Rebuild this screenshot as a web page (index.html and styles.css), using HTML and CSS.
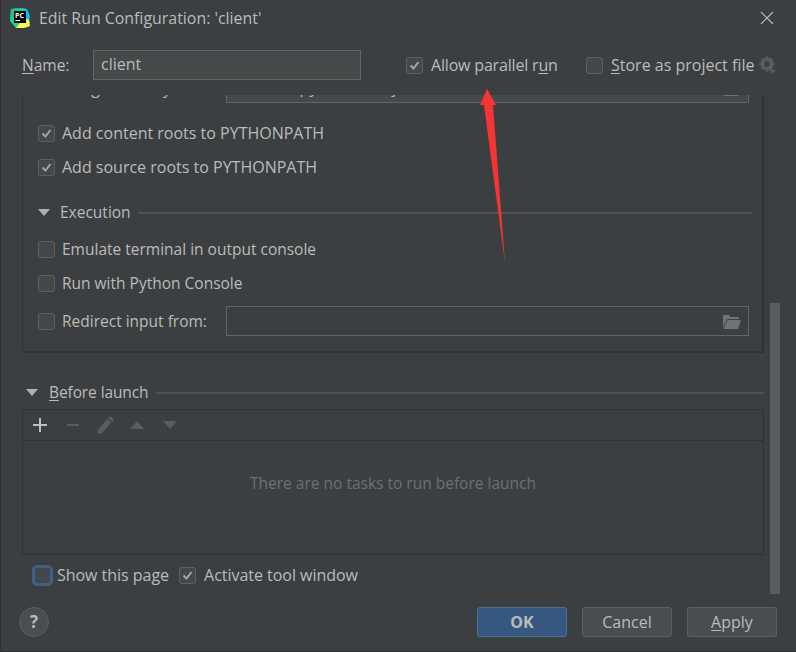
FILE: index.html
```html
<!DOCTYPE html>
<html lang="en">
<head>
  <meta charset="UTF-8">
  <title>Edit Run Configuration</title>
  <link rel="stylesheet" href="styles.css">
</head>
<body>
  <div class="dialog">
    <div class="title-bar">
      <svg class="app-logo" viewBox="0 0 20 20">
        <path d="M1 1L13 0L15 4L19 19L6 20L0 13z" fill="#21d789"></path>
        <path d="M10 15L19 10L20 18L14 20L6 20z" fill="#fcf84a"></path>
        <path d="M12 0L17 1L20 8L19 12L15 10z" fill="#07c3f2"></path>
        <path d="M1 1L8 0L5 8L0 12z" fill="#1fbf8f"></path>
        <rect x="4" y="3" width="12" height="12" fill="#000"></rect>
        <text x="5" y="9.500" class="logo-text">PC</text>
        <rect x="5.200" y="12" width="5" height="1" fill="#fff"></rect>
      </svg>
      <span class="title-text">Edit Run Configuration: 'client'</span>
      <svg class="close-icon" viewBox="0 0 14 14">
        <path d="M1 1L13 13M13 1L1 13"></path>
      </svg>
    </div>

    <div class="name-row">
      <label class="name-label"><u>N</u>ame:</label>
      <div class="name-input">client</div>
      <div class="name-options">
        <span class="check checked">
          <svg viewBox="0 0 17 17"><path d="M4 8.5L7.3 12L13 4.5"></path></svg>
        </span>
        <span class="option-text parallel-text">Allow parallel r<u>u</u>n</span>
        <span class="check store-check"></span>
        <span class="option-text"><u>S</u>tore as project file</span>
        <svg class="gear-icon" viewBox="0 0 18 18">
          <circle class="gear-ring" cx="8" cy="8" r="4.500"></circle>
          <path class="gear-teeth" d="M8 .5v3M8 12.500v3M.5 8h3M12.500 8h3M2.700 2.700l2 2M11.300 11.300l2 2M2.700 13.300l2-2M13.300 2.700l-2 2"></path>
          <path d="M10 14h7l-3.500 3.500z"></path>
        </svg>
      </div>
    </div>

    <div class="scroll-area">
      <div class="run-panel">
        <div class="clipped-row">
          <span class="clipped-label">Working directory:</span>
          <div class="field clipped-field">
            <span>D:\code\python\study</span>
            <svg class="folder-icon" viewBox="0 0 19 14">
              <path d="M1 0h6l1.500 2H17v2H5L1 13z"></path>
              <path d="M5.500 5H19l-3 9H1.500z"></path>
            </svg>
          </div>
        </div>
        <div class="check-row path-row first-check">
          <span class="check checked">
            <svg viewBox="0 0 17 17"><path d="M4 8.5L7.3 12L13 4.5"></path></svg>
          </span>
          Add content roots to PYTHONPATH
        </div>
        <div class="check-row path-row">
          <span class="check checked">
            <svg viewBox="0 0 17 17"><path d="M4 8.5L7.3 12L13 4.5"></path></svg>
          </span>
          Add source roots to PYTHONPATH
        </div>
        <div class="section-head execution-head">
          <span class="triangle"></span>
          <span class="section-name">Execution</span>
          <span class="section-line"></span>
        </div>
        <div class="check-row">
          <span class="check"></span>
          Emulate terminal in output console
        </div>
        <div class="check-row">
          <span class="check"></span>
          Run with Python Console
        </div>
        <div class="check-row redirect-row">
          <span class="check"></span>
          <span class="redirect-label">Redirect input from:</span>
          <div class="field redirect-field">
            <svg class="folder-icon" viewBox="0 0 19 14">
              <path d="M1 0h6l1.500 2H17v2H5L1 13z"></path>
              <path d="M5.500 5H19l-3 9H1.500z"></path>
            </svg>
          </div>
        </div>
      </div>

      <div class="section-head launch-head">
        <span class="triangle"></span>
        <span class="section-name"><u>B</u>efore launch</span>
        <span class="section-line"></span>
      </div>

      <div class="task-box">
        <div class="task-toolbar">
          <svg class="tool" viewBox="0 0 14 14"><path class="tool-on" d="M6 0h2v6h6v2H8v6H6V8H0V6h6z"></path></svg>
          <svg class="tool" viewBox="0 0 14 14"><path d="M1 6h12v2H1z"></path></svg>
          <svg class="tool tool-pencil" viewBox="0 0 18 18"><path d="M13 0l4 3.500-1.800 2-4-3.500zM10.300 3l4 3.500L5 17l-4.500 1L1 13.500z"></path></svg>
          <svg class="tool tool-arrow" viewBox="0 0 14 8"><path d="M7 0l7 8H0z"></path></svg>
          <svg class="tool tool-arrow" viewBox="0 0 14 8"><path d="M0 0h14L7 8z"></path></svg>
        </div>
        <div class="task-empty">There are no tasks to run before launch</div>
      </div>

      <div class="launch-options">
        <span class="check focused"></span>
        <span class="show-label">Show this page</span>
        <span class="check checked">
          <svg viewBox="0 0 17 17"><path d="M4 8.5L7.3 12L13 4.5"></path></svg>
        </span>
        <span>Activate tool window</span>
      </div>

      <div class="scroll-thumb"></div>
    </div>

    <div class="footer">
      <div class="help-button">?</div>
      <div class="footer-buttons">
        <div class="btn btn-ok">OK</div>
        <div class="btn">Cancel</div>
        <div class="btn"><u>A</u>pply</div>
      </div>
    </div>

    <svg class="red-arrow" viewBox="0 0 40 180">
      <path d="M18 0L27 16L24 16L36 174L15 16L11 16z"></path>
    </svg>
  </div>
</body>
</html>
```

FILE: styles.css
```css
* {
  margin: 0;
  padding: 0;
  box-sizing: border-box;
}

body {
  font-family: "Open Sans", "Noto Sans", sans-serif;
  font-size: 15.5px;
  color: #bbbbbb;
  background: #3c3f41;
}

u {
  text-underline-offset: 2px;
}

.dialog {
  position: relative;
  width: 796px;
  height: 652px;
  background: #3c3f41;
  border-left: 1px solid #323232;
  border-bottom: 1px solid #323232;
  display: flex;
  flex-direction: column;
  overflow: hidden;
}

/* Title bar */
.title-bar {
  height: 36px;
  padding-left: 9px;
  padding-right: 22px;
  display: flex;
  align-items: center;
}

.app-logo {
  width: 20px;
  height: 20px;
}

.logo-text {
  font-family: "Open Sans", sans-serif;
  font-size: 7px;
  font-weight: 700;
  fill: #fff;
}

.title-text {
  margin-left: 9px;
  font-size: 15.9px;
}

.close-icon {
  width: 14px;
  height: 14px;
  margin-left: auto;
  fill: none;
  stroke: #bbbbbb;
  stroke-width: 1.1;
}

/* Name row */
.name-row {
  height: 59px;
  padding: 14px 0 15px 21px;
  display: flex;
  align-items: center;
}

.name-label {
  width: 71px;
}

.name-input {
  width: 268px;
  height: 30px;
  padding-left: 7px;
  line-height: 27px;
  font-size: 16px;
  background: #45494a;
  border: 1px solid #646464;
}

.name-options {
  margin-left: 45px;
  display: flex;
  align-items: center;
  font-size: 16px;
}

.option-text {
  margin-left: 8px;
}

.parallel-text {
  width: 126px;
  white-space: nowrap;
  letter-spacing: -0.18px;
}

.store-check {
  margin-left: 29px;
}

.gear-icon {
  width: 18px;
  height: 18px;
  margin-left: 5px;
  fill: #5a5d5f;
}

.gear-ring {
  fill: none;
  stroke: #5a5d5f;
  stroke-width: 3.5;
}

.gear-teeth {
  fill: none;
  stroke: #5a5d5f;
  stroke-width: 3;
}

/* Checkboxes */
.check {
  flex: none;
  display: inline-block;
  width: 17px;
  height: 17px;
  background: #43494a;
  border: 1px solid #5e6060;
  border-radius: 3px;
}

.check svg {
  display: block;
  width: 15px;
  height: 15px;
  fill: none;
  stroke: #a7a7a7;
  stroke-width: 2.2;
}

.check.focused {
  width: 21px;
  height: 21px;
  margin-left: -2px;
  background: #43494a;
  border: 3px solid #3d6185;
  border-radius: 5px;
}

/* Scrolling part */
.scroll-area {
  position: relative;
  height: 500px;
  padding: 0 32px 0 21px;
}

.run-panel {
  height: 258px;
  padding-left: 15px;
  padding-right: 13px;
  border-left: 1px solid #323232;
  border-right: 2px solid #323232;
  border-bottom: 2px solid #323232;
  overflow: hidden;
}

.clipped-row {
  height: 30px;
  margin-top: -22px;
  display: flex;
  align-items: center;
  font-size: 16px;
}

.clipped-label {
  width: 188px;
}

.field {
  position: relative;
  height: 30px;
  flex: 1;
  background: #3c3f41;
  border: 1px solid #646464;
}

.clipped-field {
  height: 30px;
  padding-left: 9px;
  line-height: 27px;
  background: #45494a;
}

.folder-icon {
  position: absolute;
  right: 7px;
  top: 8px;
  width: 19px;
  height: 14px;
  fill: #6e7375;
}

.check-row {
  height: 34px;
  display: flex;
  align-items: center;
  gap: 7px;
}

.path-row {
  font-size: 16px;
}

.first-check {
  margin-top: 13px;
}

.section-head {
  display: flex;
  align-items: center;
}

.execution-head {
  height: 24px;
  margin-top: 16px;
  margin-bottom: 8px;
  margin-right: -3px;
}

.launch-head {
  height: 24px;
  margin-top: 27px;
  margin-left: 4px;
}

.launch-head .section-name {
  margin-left: 11px;
  letter-spacing: -0.1px;
}

.triangle {
  flex: none;
  width: 0;
  height: 0;
  border-left: 6px solid transparent;
  border-right: 6px solid transparent;
  border-top: 7px solid #afb1b3;
}

.section-name {
  margin-left: 10px;
}

.section-line {
  flex: 1;
  height: 2px;
  margin-left: 7px;
  margin-top: 2px;
  background: #515151;
}

.redirect-row {
  height: 30px;
  margin-top: 6px;
}

.redirect-label {
  width: 157px;
  flex: none;
}

.task-box {
  height: 146px;
  margin-top: 5px;
  border: 1px solid #323232;
  display: flex;
  flex-direction: column;
}

.task-toolbar {
  height: 31px;
  padding-left: 10px;
  border-bottom: 1px solid #323232;
  display: flex;
  align-items: center;
  gap: 19px;
}

.tool {
  width: 14px;
  height: 14px;
  fill: #5a5d5f;
}

.tool-on {
  fill: #c0c0c0;
}

.tool-pencil {
  width: 18px;
  height: 18px;
  margin-left: -2px;
  margin-right: -4px;
}

.tool-arrow {
  height: 8px;
}

.task-empty {
  flex: 1;
  display: flex;
  align-items: center;
  justify-content: center;
  padding-bottom: 30px;
  color: #6e7072;
}

.launch-options {
  height: 40px;
  padding-left: 12px;
  display: flex;
  align-items: center;
  gap: 8px;
  font-size: 16px;
  letter-spacing: -0.03px;
}

.show-label {
  margin-left: -4px;
  margin-right: 2px;
}

.scroll-thumb {
  position: absolute;
  right: 16px;
  top: 208px;
  width: 10px;
  height: 291px;
  background: #5a5c5e;
}

/* Footer */
.footer {
  flex: 1;
  padding: 12px 19px 0 18px;
  display: flex;
  justify-content: space-between;
}

.help-button {
  width: 30px;
  height: 30px;
  border-radius: 50%;
  background: #4b4e50;
  border: 1px solid #5a5d5f;
  text-align: center;
  line-height: 27px;
  font-size: 17px;
  font-weight: 700;
}

.footer-buttons {
  display: flex;
  gap: 15px;
}

.btn {
  width: 90px;
  height: 30px;
  text-align: center;
  line-height: 28px;
  font-size: 16px;
  background: #4a4d4f;
  border: 1px solid #5e6060;
  border-radius: 3px;
}

.btn-ok {
  background: #365880;
  border-color: #4c708c;
  font-weight: 700;
}

/* Annotation drawn over the screenshot */
.red-arrow {
  position: absolute;
  left: 468px;
  top: 89px;
  width: 40px;
  height: 180px;
  fill: #f73434;
}
```
